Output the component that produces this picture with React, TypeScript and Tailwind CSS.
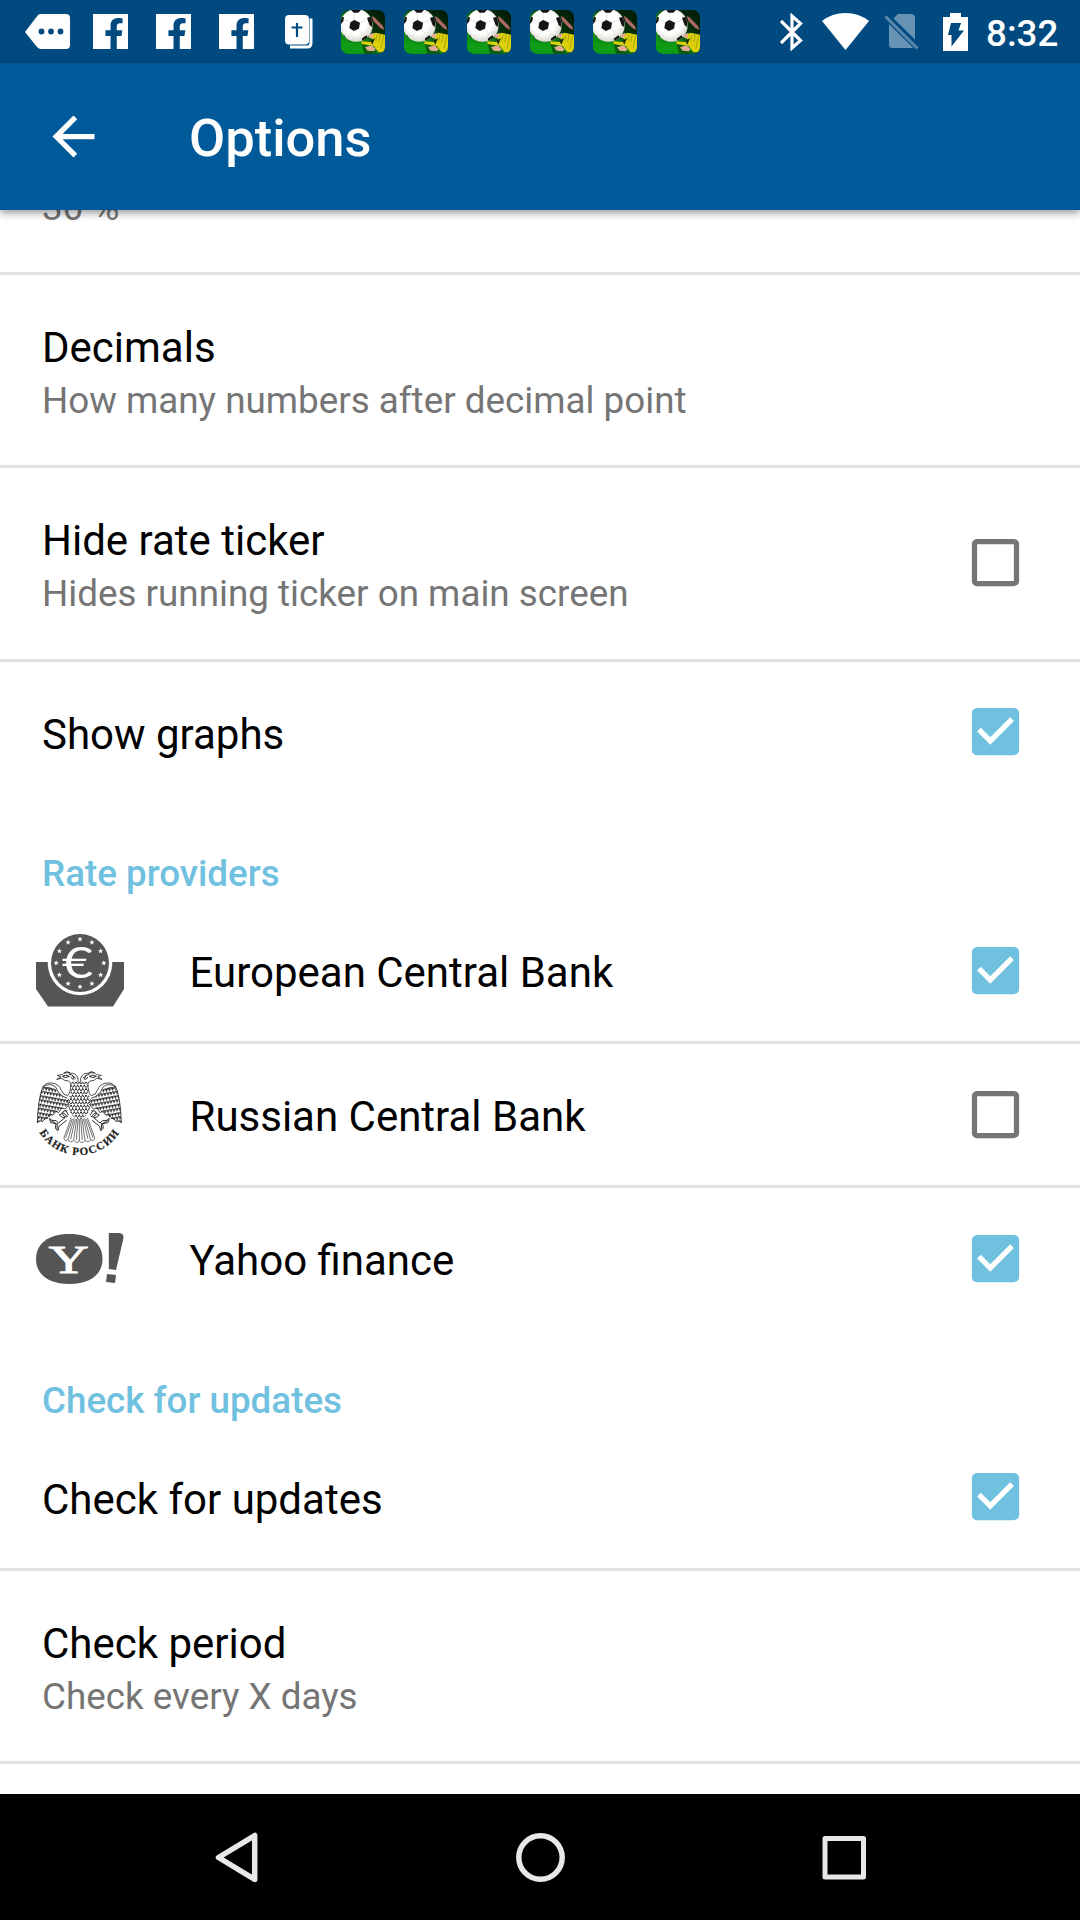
import React from "react";
import { FaFacebookF } from "react-icons/fa";

const feathers: React.ReactNode[] = [];
for (let r = 0; r < 12; r++) {
  for (let c = 0; c < 10; c++) {
    const x = 103 + c * 10 + (r % 2) * 5;
    const y = 50 + r * 10;
    feathers.push(<path key={`${r}-${c}`} d={`M${x - 5} ${y}q5 14 10 0`} />);
  }
}

const wingRows: React.ReactNode[] = [];
for (let r = 0; r < 9; r++) {
  for (let c = 0; c < 12; c++) {
    const x = 22 + c * 9 + (r % 2) * 4.5;
    const y = 62 + r * 13 + c * 1.6;
    wingRows.push(
      <g key={`${r}-${c}`}>
        <path d={`M${x - 4.5} ${y}q4.5 16 9 0`} />
        <path d={`M${x - 2.5} ${y + 1}l1.5 9 4 -9`} fill="#222" strokeWidth="1" />
      </g>
    );
  }
}

function EagleHalf() {
  return (
    <g>
      <path d="M144 54L144 42Q142 25 126 25Q106 20 96 28L82 32L94 36L80 43L98 44Q108 47 118 45L124 52Q123 88 112 92Q98 90 94 76Q86 55 64 54Q42 52 35 75Q24 110 22 173L48 160L49 150L78 152L80 140L104 132L118 118L120 142Q130 160 148 164" fill="#fff" stroke="none" />
      <g clipPath="url(#wing)" stroke="#333" strokeWidth="1.9">{wingRows}</g>
      <path d="M35 75Q24 110 22 173L34 164L36 171L48 158L50 162L60 145L68 151L78 139L86 143L94 130L106 132L118 117" />
      <path d="M35 75Q42 52 64 54Q86 55 94 76Q98 90 112 92Q123 84 122 54M40 66Q60 51 78 67Q84 90 112 100M42 62Q34 69 46 68Q58 66 68 72" />
      <path d="M122 54Q118 46 104 46L96 40L80 43L93 36L82 31L96 29Q104 20 120 25Q138 22 144 40V52" />
      <path d="M97 34Q108 27 118 34Q106 42 97 34M118 28Q132 29 132 44M102 24Q110 17 120 23M122 36l8 8M126 30l11 10" strokeWidth="3" />
      <path d="M112 138Q96 134 98 148Q105 160 114 153M98 144L88 150Q98 160 105 158L86 174Q80 164 66 166L58 160L62 173L78 176L76 190L84 197L87 184L110 166M62 166l18 11M82 174l-1 19M97 141l14 12M106 136l10 14" strokeWidth="2.8" />
    </g>
  );
}

function RussianBankIcon() {
  return (
    <svg className="h-[100px] w-[100px]" viewBox="0 0 300 300" fill="none" stroke="#222" strokeWidth="2.4">
      <defs>
        <clipPath id="wing">
          <path d="M35 75Q50 58 76 70Q84 92 112 100L118 117L94 132L78 142L50 162L22 173Q24 110 35 75Z" />
        </clipPath>
        <clipPath id="body">
          <path d="M124 50H172L174 88Q190 105 176 140Q162 162 148 164Q134 162 120 140Q106 105 122 88Z" />
        </clipPath>
        <path id="arc" d="M27 201A140 140 0 0 0 271 197" />
      </defs>
      <EagleHalf />
      <g transform="translate(296 0) scale(-1 1)">
        <EagleHalf />
      </g>
      <g clipPath="url(#body)" strokeWidth="3">{feathers}</g>
      <path d="M124 158Q110 196 102 218Q103 231 114 224Q121 236 131 226Q140 238 148 228Q156 238 165 226Q175 236 182 224Q193 231 194 218Q186 196 172 158M132 160L114 224M140 162L131 226M148 163V228M156 162L165 226M164 160L182 224M127 162L107 218M136 162L122 222M144 164L139 225M152 164L157 225M160 162L174 222M169 162L189 218" strokeWidth="1.9" />
      <text fill="#222" stroke="#222" strokeWidth="0.6" className="font-['Liberation_Serif',serif] text-[33px] font-bold">
        <textPath href="#arc" startOffset="2" textLength="286" lengthAdjust="spacing">БАНК РОССИИ</textPath>
      </text>
    </svg>
  );
}

function star(cx: number, cy: number, r: number) {
  return Array.from({ length: 10 }, (_, i) => {
    const a = -Math.PI / 2 + (i * Math.PI) / 5;
    const q = i % 2 ? r * 0.42 : r;
    return `${(cx + q * Math.cos(a)).toFixed(2)},${(cy + q * Math.sin(a)).toFixed(2)}`;
  }).join(" ");
}

function EuropeanBankIcon() {
  return (
    <svg className="-mt-[1px] h-[74px] w-[88px]" viewBox="0 0 88 74">
      <path d="M0 29H88V56L77 73.5H12L0 56Z" fill="#555" />
      <circle cx="44" cy="30" r="32.3" fill="#fff" />
      <circle cx="44" cy="30" r="29" fill="#555" />
      {Array.from({ length: 12 }, (_, i) => (
        <polygon
          key={i}
          points={star(44 + 23.8 * Math.sin((i * Math.PI) / 6), 30 - 23.8 * Math.cos((i * Math.PI) / 6), 2.8)}
          fill="#fff"
        />
      ))}
      <text transform="translate(26 44.5) scale(1.25 1)" fill="#fff" className="font-[Lato,sans-serif] text-[43px] font-normal">€</text>
    </svg>
  );
}

function YahooIcon() {
  return (
    <svg className="h-[52px] w-[88px]" viewBox="0 0 88 52">
      <path d="M33.3 1C55 1 66.5 11 66.5 26S55 51 33.3 51S0 41 0 26S12 1 33.3 1Z" fill="#555" />
      <text transform="translate(12.5 40) scale(1.43 1)" fill="#fff" stroke="#fff" strokeWidth="0.8" className="font-['Liberation_Serif',serif] text-[39px]">Y</text>
      <path d="M72.8 0H82Q88 0 87.5 5L80 37L72.8 36ZM71 41L80 42L79 50L70 49Z" fill="#555" />
    </svg>
  );
}

function FacebookNote() {
  return (
    <div className="relative h-[35px] w-[35px] bg-white">
      <FaFacebookF className="absolute top-[4px] left-[11px] h-[32px] w-[20px] text-[#004a80]" />
    </div>
  );
}

function SoccerNote() {
  return (
    <svg className="h-[44px] w-[44px]" viewBox="0 0 132 132">
      <defs>
        <clipPath id="tile"><rect width="132" height="132" rx="22" /></clipPath>
        <clipPath id="ball"><circle cx="46" cy="46" r="49" /></clipPath>
        <linearGradient id="grass" x1="0" y1="1" x2="1" y2="0">
          <stop offset="0" stopColor="#0a9a10" />
          <stop offset=".4" stopColor="#12801a" />
          <stop offset=".65" stopColor="#05300c" />
          <stop offset="1" stopColor="#031806" />
        </linearGradient>
        <radialGradient id="shade" cx=".45" cy=".4" r=".6">
          <stop offset=".6" stopColor="#fff" />
          <stop offset="1" stopColor="#d8d8d0" />
        </radialGradient>
      </defs>
      <g clipPath="url(#tile)">
        <rect width="132" height="132" fill="url(#grass)" />
        <path d="M0 92Q30 104 60 98L84 130H0Z" fill="#0f9c14" />
        <path d="M60 96L90 112L110 132H70Z" fill="#0a5c10" />
        <path d="M92 18L100 22L126 48L130 60L118 54L98 34Z" fill="#b06a64" />
        <path d="M84 78L104 68L132 74V128L112 126L98 108L62 102L60 94L86 96L98 92Z" fill="#dccf0c" />
        <path d="M88 92L102 84L94 104Z" fill="#14330a" />
        <path d="M108 74l-4 18M118 72l-5 24M128 76l-8 40" stroke="#a9a40a" strokeWidth="3" />
        <path d="M82 74L98 68L94 84L84 84ZM72 112L92 106L104 118L98 124L80 122Z" fill="#e2ab92" />
        <circle cx="46" cy="46" r="49" fill="url(#shade)" />
        <g clipPath="url(#ball)" fill="#151515">
          <path d="M40 30L57 38L54 56L38 63L25 54L28 37Z" />
          <path d="M30 0H60L52 8L38 8ZM78 24L94 18V52L86 46ZM62 86L76 76L82 84L66 96ZM0 72L10 76L20 92H8ZM0 20L9 22L7 34L0 42Z" />
        </g>
        <path d="M40 30V9M57 38L78 30M54 56L68 78M38 63L18 82M28 37L9 28" stroke="#dcdcd8" strokeWidth="2" />
      </g>
    </svg>
  );
}

function Cell({ children }: { children: React.ReactNode }) {
  return <div className="flex w-[63px] shrink-0 items-center justify-center">{children}</div>;
}

function StatusBar() {
  return (
    <div className="flex h-[63px] bg-[#004a80]">
      <div className="flex w-[780px] shrink-0 pl-4">
        <Cell>
          <svg className="h-[35px] w-[45px]" viewBox="0 0 45 35">
            <path d="M13 1Q14 0 16 0H41Q45 0 45 4V31Q45 35 41 35H16Q14 35 12 33L0 18Z" fill="#fff" />
            <g fill="#004a80">
              <circle cx="16.5" cy="17.5" r="2.9" />
              <circle cx="26" cy="17.5" r="2.9" />
              <circle cx="35.5" cy="17.5" r="2.9" />
            </g>
          </svg>
        </Cell>
        <Cell><FacebookNote /></Cell>
        <Cell><FacebookNote /></Cell>
        <Cell><FacebookNote /></Cell>
        <Cell>
          <svg className="mr-[2px] h-[34px] w-[28px]" viewBox="0 0 28 34">
            <rect width="24" height="29.5" rx="4" fill="#fff" />
            <path d="M26 3.5V28Q26 32 22 32H5" fill="none" stroke="#fff" strokeWidth="3" />
            <path d="M12 8V22M6.5 12.5H17.5" stroke="#004a80" strokeWidth="2.2" />
          </svg>
        </Cell>
        <Cell><SoccerNote /></Cell>
        <Cell><SoccerNote /></Cell>
        <Cell><SoccerNote /></Cell>
        <Cell><SoccerNote /></Cell>
        <Cell><SoccerNote /></Cell>
        <Cell><SoccerNote /></Cell>
      </div>
      <div className="flex items-center">
        <svg className="h-[38px] w-[23px]" viewBox="0 0 23 38" fill="none" stroke="#fff" strokeWidth="3.2">
          <path d="M1 8L20.5 27.5L12 35V3L20.5 10.5L1 30" />
        </svg>
        <svg className="ml-[19px] h-[37px] w-[47px]" viewBox="0 0 47 37">
          <path d="M0 8Q10 0 23.5 0T47 8L23.5 37Z" fill="#fff" />
        </svg>
        <svg className="ml-[15px] h-[38px] w-[36px]" viewBox="0 0 36 38">
          <path d="M14 1H27Q31 1 31 5V26.5L9.5 5.5ZM5 11L29.5 35H8Q5 35 5 32Z" fill="#fff" opacity=".4" />
          <path d="M1.5 3.5L33.5 35.5" stroke="#5988ab" strokeWidth="3" />
        </svg>
        <svg className="ml-[23px] h-[38px] w-[25px]" viewBox="0 0 25 38">
          <path d="M7 0H18V4H25V38H0V4H7Z" fill="#fff" />
          <path d="M8 10H18L15.5 17.5H21L8.5 33.5V22H5Z" fill="#004a80" />
        </svg>
        <span className="ml-[18px] pt-[3px] text-[36.75px] leading-[43px] font-medium text-white">8:32</span>
      </div>
    </div>
  );
}

function Checkbox({ checked }: { checked: boolean }) {
  return (
    <svg className="mr-[53px] mb-px h-[63px] w-[63px] shrink-0" viewBox="0 0 24 24" role="checkbox" aria-checked={checked}>
      {checked ? (
        <path fill="#70c0e0" d="M19 3H5c-1.11 0-2 .9-2 2v14c0 1.1.89 2 2 2h14c1.11 0 2-.9 2-2V5c0-1.1-.89-2-2-2zm-9 14l-5-5 1.41-1.41L10 14.17l7.59-7.59L19 8l-9 9z" />
      ) : (
        <path fill="#757575" d="M19 5v14H5V5h14m0-2H5c-1.1 0-2 .9-2 2v14c0 1.1.9 2 2 2h14c1.1 0 2-.9 2-2V5c0-1.1-.9-2-2-2z" />
      )}
    </svg>
  );
}

interface RowProps {
  title: string;
  summary?: string;
  icon?: React.ReactNode;
  checked?: boolean;
}

function Row({ title, summary, icon, checked }: RowProps) {
  return (
    <div className={summary ? "flex h-[190.5px] shrink-0 items-center" : "flex h-[141px] shrink-0 items-center"}>
      {icon ? (
        <div className="flex w-[189.5px] shrink-0 pl-[30px]">
          <div className="flex w-[100px] justify-center">{icon}</div>
        </div>
      ) : (
        <div className="w-[42px] shrink-0" />
      )}
      <div className={summary ? "flex grow flex-col gap-[7px] pt-[5px]" : "grow pt-[4px]"}>
        <div className="text-[42px] leading-[49px] text-black">{title}</div>
        {summary && <div className="text-[36.8px] leading-[43px] text-[#757575]">{summary}</div>}
      </div>
      {checked !== undefined && <Checkbox checked={checked} />}
    </div>
  );
}

function Divider() {
  return <div className="h-[3px] shrink-0 bg-[#e0e0e0]" />;
}

function Header({ children }: { children: string }) {
  return (
    <div className="h-[97.5px] shrink-0 pt-[49.5px] pl-[42px] text-[36.75px] leading-[43px] font-medium text-[#70c0e0]">
      {children}
    </div>
  );
}

export default function App() {
  return (
    <div className="flex h-[1920px] w-[1080px] flex-col overflow-hidden bg-white font-[Roboto,sans-serif]">
      <StatusBar />
      <div className="relative z-10 flex h-[147px] shrink-0 items-center bg-[#005a9a] shadow-[0_3px_8px_rgba(0,0,0,0.4)]">
        <svg className="ml-[42px] h-[63px] w-[63px]" viewBox="0 0 24 24" fill="#fff">
          <path d="M20 11H7.83l5.59-5.59L12 4l-8 8 8 8 1.41-1.41L7.83 13H20v-2z" />
        </svg>
        <h1 className="ml-[84px] pt-[3px] text-[52.5px] leading-[62px] font-medium text-white">Options</h1>
      </div>
      <div className="flex h-[1584px] shrink-0 flex-col overflow-hidden">
        <div className="h-[61.5px] shrink-0 pl-[42px]">
          <div className="-mt-[24px] text-[36.75px] leading-[43px] text-[#757575]">30 %</div>
        </div>
        <Divider />
        <Row title="Decimals" summary="How many numbers after decimal point" />
        <Divider />
        <Row title="Hide rate ticker" summary="Hides running ticker on main screen" checked={false} />
        <Divider />
        <Row title="Show graphs" checked />
        <Header>Rate providers</Header>
        <Row title="European Central Bank" icon={<EuropeanBankIcon />} checked />
        <Divider />
        <Row title="Russian Central Bank" icon={<RussianBankIcon />} checked={false} />
        <Divider />
        <Row title="Yahoo finance" icon={<YahooIcon />} checked />
        <Header>Check for updates</Header>
        <Row title="Check for updates" checked />
        <Divider />
        <Row title="Check period" summary="Check every X days" />
        <Divider />
      </div>
      <div className="flex h-[126px] shrink-0 items-center justify-center bg-black">
        <svg className="h-[126px] w-[720px]" viewBox="0 0 720 126" fill="none" stroke="#e8e8e8" strokeLinejoin="round">
          <path d="M38.5 63.5L74.7 41.5V85.5Z" strokeWidth="5.5" />
          <circle cx="360.5" cy="63.5" r="21.7" strokeWidth="5.5" />
          <rect x="645" y="44.5" width="38.5" height="38.5" strokeWidth="5" />
        </svg>
      </div>
    </div>
  );
}
